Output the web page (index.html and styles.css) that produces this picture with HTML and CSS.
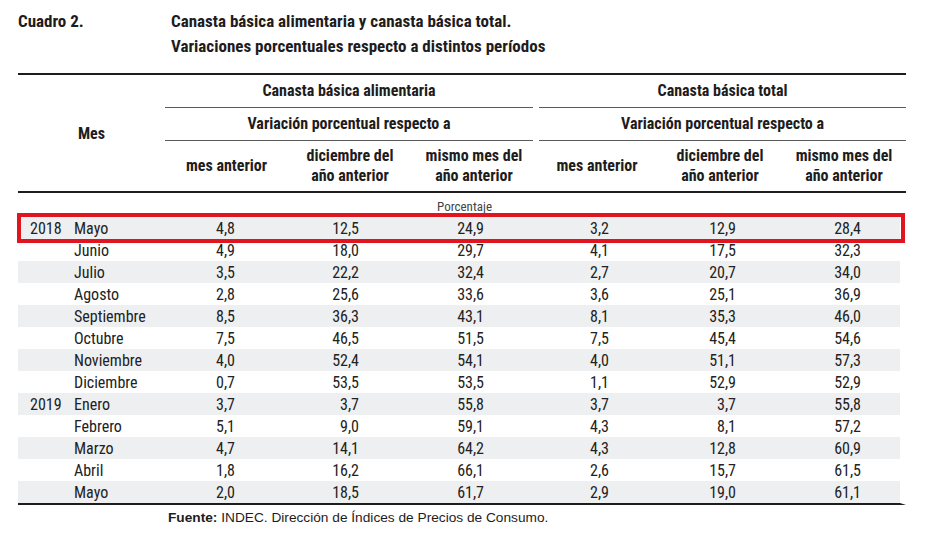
FILE: index.html
```html
<!DOCTYPE html>
<html lang="es">
<head>
<meta charset="utf-8">
<title>Cuadro 2</title>
<link rel="stylesheet" href="styles.css">
</head>
<body>
<div class="page">
  <header class="title">
    <div class="label">Cuadro 2.</div>
    <div class="heading">
      <div>Canasta básica alimentaria y canasta básica total.</div>
      <div>Variaciones porcentuales respecto a distintos períodos</div>
    </div>
  </header>

  <div class="table-wrap">
    <table class="data">
      <colgroup>
        <col class="c-year"><col class="c-month">
        <col class="c-d1"><col class="c-d2"><col class="c-d3">
        <col class="c-d4"><col class="c-d5"><col class="c-d6">
      </colgroup>
      <thead>
        <tr class="r1">
          <th rowspan="3" colspan="2" class="mes">Mes</th>
          <th colspan="3"><div class="grp grp-l">Canasta básica alimentaria</div></th>
          <th colspan="3"><div class="grp grp-r">Canasta básica total</div></th>
        </tr>
        <tr class="r2">
          <th colspan="3"><div class="grp grp-l">Variación porcentual respecto a</div></th>
          <th colspan="3"><div class="grp grp-r">Variación porcentual respecto a</div></th>
        </tr>
        <tr class="r3">
          <th class="sub"><div>mes anterior</div></th>
          <th class="sub"><div>diciembre del<br>año anterior</div></th>
          <th class="sub"><div>mismo mes del<br>año anterior</div></th>
          <th class="sub"><div>mes anterior</div></th>
          <th class="sub"><div>diciembre del<br>año anterior</div></th>
          <th class="sub"><div>mismo mes del<br>año anterior</div></th>
        </tr>
      </thead>
      <tbody>
        <tr class="unit"><td colspan="8">Porcentaje</td></tr>
        <tr class="odd"><td class="yr">2018</td><td class="mo">Mayo</td><td>4,8</td><td>12,5</td><td>24,9</td><td>3,2</td><td>12,9</td><td>28,4</td></tr>
        <tr><td class="yr"></td><td class="mo">Junio</td><td>4,9</td><td>18,0</td><td>29,7</td><td>4,1</td><td>17,5</td><td>32,3</td></tr>
        <tr class="odd"><td class="yr"></td><td class="mo">Julio</td><td>3,5</td><td>22,2</td><td>32,4</td><td>2,7</td><td>20,7</td><td>34,0</td></tr>
        <tr><td class="yr"></td><td class="mo">Agosto</td><td>2,8</td><td>25,6</td><td>33,6</td><td>3,6</td><td>25,1</td><td>36,9</td></tr>
        <tr class="odd"><td class="yr"></td><td class="mo">Septiembre</td><td>8,5</td><td>36,3</td><td>43,1</td><td>8,1</td><td>35,3</td><td>46,0</td></tr>
        <tr><td class="yr"></td><td class="mo">Octubre</td><td>7,5</td><td>46,5</td><td>51,5</td><td>7,5</td><td>45,4</td><td>54,6</td></tr>
        <tr class="odd"><td class="yr"></td><td class="mo">Noviembre</td><td>4,0</td><td>52,4</td><td>54,1</td><td>4,0</td><td>51,1</td><td>57,3</td></tr>
        <tr><td class="yr"></td><td class="mo">Diciembre</td><td>0,7</td><td>53,5</td><td>53,5</td><td>1,1</td><td>52,9</td><td>52,9</td></tr>
        <tr class="odd"><td class="yr">2019</td><td class="mo">Enero</td><td>3,7</td><td>3,7</td><td>55,8</td><td>3,7</td><td>3,7</td><td>55,8</td></tr>
        <tr><td class="yr"></td><td class="mo">Febrero</td><td>5,1</td><td>9,0</td><td>59,1</td><td>4,3</td><td>8,1</td><td>57,2</td></tr>
        <tr class="odd"><td class="yr"></td><td class="mo">Marzo</td><td>4,7</td><td>14,1</td><td>64,2</td><td>4,3</td><td>12,8</td><td>60,9</td></tr>
        <tr><td class="yr"></td><td class="mo">Abril</td><td>1,8</td><td>16,2</td><td>66,1</td><td>2,6</td><td>15,7</td><td>61,5</td></tr>
        <tr class="odd last"><td class="yr"></td><td class="mo">Mayo</td><td>2,0</td><td>18,5</td><td>61,7</td><td>2,9</td><td>19,0</td><td>61,1</td></tr>
      </tbody>
    </table>
    <div class="highlight"></div>
  </div>

  <p class="source"><b>Fuente:</b> INDEC. Dirección de Índices de Precios de Consumo.</p>
</div>
</body>
</html>
```

FILE: styles.css
```css
html, body {
  margin: 0;
  padding: 0;
  background: #ffffff;
}

.page {
  padding: 8px 0 0 18px;
  color: #1e1c1d;
  font-family: "Roboto Condensed", Roboto, "Liberation Sans", sans-serif;
  font-stretch: condensed;
}

.title {
  display: flex;
  font-weight: bold;
  font-size: 17px;
  line-height: 25px;
  padding-top: 1px;
}

.title .label {
  width: 153px;
}

.table-wrap {
  position: relative;
  width: 888px;
  margin-top: 14px;
}

table.data {
  width: 888px;
  table-layout: fixed;
  border-collapse: separate;
  border-spacing: 0;
  font-size: 16px;
}

.c-year { width: 50px; }
.c-month { width: 97px; }
.c-d1 { width: 123px; }
.c-d2 { width: 124px; }
.c-d3 { width: 124px; }
.c-d4 { width: 122px; }
.c-d5 { width: 124px; }
.c-d6 { width: 124px; }

thead th {
  padding: 0;
  font-weight: bold;
  font-size: 16px;
  text-align: center;
  vertical-align: middle;
}

.r1 th {
  border-top: 2px solid #1e1c1d;
}

.grp {
  height: 32px;
  line-height: 32px;
  border-bottom: 1px solid #5a5a5a;
}

.grp-l { margin-right: 3px; }
.grp-r { margin-left: 3px; }

.mes {
  border-bottom: 2px solid #1e1c1d;
}

.sub {
  border-bottom: 2px solid #1e1c1d;
}

.sub div {
  height: 50px;
  display: flex;
  align-items: center;
  justify-content: center;
  line-height: 20px;
}

tbody td {
  padding: 2px 0 0 0;
  line-height: 20px;
  text-align: right;
  white-space: nowrap;
  color: #222222;
}

tbody tr.odd td {
  background: #eeeff1;
}

tbody td:nth-child(3) { padding-right: 53px; }
tbody td:nth-child(4) { padding-right: 53px; }
tbody td:nth-child(5) { padding-right: 52px; }
tbody td:nth-child(6) { padding-right: 49px; }
tbody td:nth-child(7) { padding-right: 46px; }
tbody td:nth-child(8) {
  padding-right: 39px;
  border-right: 6px solid #ffffff;
}

tbody td.yr {
  text-align: left;
  padding-left: 12px;
}

tbody td.mo {
  text-align: left;
  padding-left: 6px;
}

tbody tr.unit td {
  padding: 4px 0 0 5px;
  line-height: 20px;
  font-size: 13px;
  color: #444444;
  text-align: center;
  border-right: 0;
  background: transparent;
}

tbody tr.last td {
  border-bottom: 2px solid #1e1c1d;
}

.highlight {
  position: absolute;
  left: -1px;
  top: 140px;
  width: 888px;
  height: 30px;
  box-sizing: border-box;
  border: 4px solid #e0151f;
  pointer-events: none;
}

.source {
  margin: 5px 0 0 150px;
  font-family: "Liberation Sans", Arial, sans-serif;
  font-stretch: normal;
  font-size: 13.7px;
  line-height: 16px;
  color: #1e1c1d;
}
```
